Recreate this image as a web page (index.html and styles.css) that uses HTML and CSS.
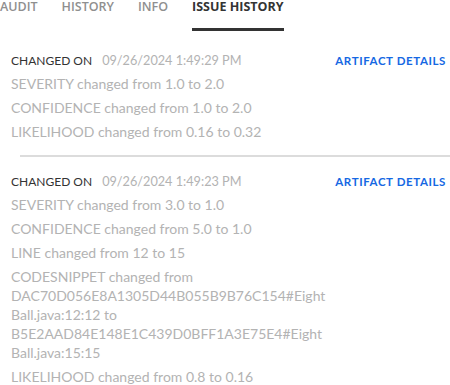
FILE: index.html
```html
<!DOCTYPE html>
<html>
<head>
<meta charset="utf-8">
<link rel="stylesheet" href="styles.css">
</head>
<body>
<nav class="tabs">
  <div class="tab">AUDIT</div>
  <div class="tab">HISTORY</div>
  <div class="tab">INFO</div>
  <div class="tab active">ISSUE HISTORY</div>
</nav>
<section class="entry first">
  <div class="head">
    <div><span class="label">CHANGED ON</span><span class="date">09/26/2024 1:49:29 PM</span></div>
    <a class="link">ARTIFACT DETAILS</a>
  </div>
  <p class="change">SEVERITY changed from 1.0 to 2.0</p>
  <p class="change">CONFIDENCE changed from 1.0 to 2.0</p>
  <p class="change">LIKELIHOOD changed from 0.16 to 0.32</p>
</section>
<hr class="divider">
<section class="entry">
  <div class="head">
    <div><span class="label">CHANGED ON</span><span class="date">09/26/2024 1:49:23 PM</span></div>
    <a class="link">ARTIFACT DETAILS</a>
  </div>
  <p class="change">SEVERITY changed from 3.0 to 1.0</p>
  <p class="change">CONFIDENCE changed from 5.0 to 1.0</p>
  <p class="change">LINE changed from 12 to 15</p>
  <p class="change code">CODESNIPPET changed from DAC70D056E8A1305D44B055B9B76C154#Eight Ball.java:12:12 to B5E2AAD84E148E1C439D0BFF1A3E75E4#Eight Ball.java:15:15</p>
  <p class="change">LIKELIHOOD changed from 0.8 to 0.16</p>
</section>
</body>
</html>
```
FILE: styles.css
```css
html, body {
  margin: 0;
  padding: 0;
  background: #fff;
}
body {
  font-family: Lato, "Noto Sans", sans-serif;
  font-size: 14px;
  color: #b3b3b3;
  width: 450px;
  overflow: hidden;
}
.tabs {
  display: flex;
  gap: 24px;
  margin-top: -2px;
  font-family: "Open Sans", sans-serif;
  font-size: 12.5px;
  font-weight: 600;
  color: #8f8f8f;
  line-height: 18px;
}
.tab {
  padding-bottom: 12px;
}
.tab.active {
  color: #333;
  font-weight: 700;
  border-bottom: 3px solid #333;
}
.entry {
  padding: 0 4px 0 11px;
}
.entry.first {
  margin-top: 19px;
}
.head {
  display: flex;
  justify-content: space-between;
  align-items: center;
  line-height: 20px;
  margin-bottom: 3px;
}
.label {
  color: #333;
  margin-right: 10px;
  font-size: 12px;
}
.date {
  color: #b3b3b3;
  font-size: 12.7px;
}
.link {
  color: #1668e3;
  font-weight: 700;
  font-size: 11.5px;
  letter-spacing: 0.6px;
}
.change {
  margin: 0 0 4px;
  line-height: 20px;
}
.change.code {
  line-height: 19px;
  max-width: 400px;
  margin-bottom: 5px;
}
.divider {
  border: 0;
  border-top: 2px solid #dcdcdc;
  margin: 13px 0 14px 20px;
}
```
